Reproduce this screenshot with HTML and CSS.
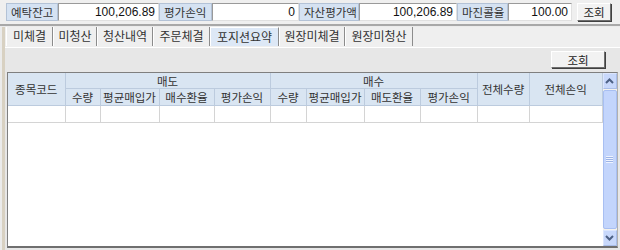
FILE: index.html
```html
<!DOCTYPE html>
<html lang="ko">
<head>
    <meta charset="UTF-8">
    <title>포지션요약</title>
    <link rel="stylesheet" href="styles.css">
</head>
<body>
    <div class="topbar">
        <span class="lbl w52">예탁잔고</span>
        <span class="val w101">100,206.89</span>
        <span class="lbl w53">평가손익</span>
        <span class="val w87">0</span>
        <span class="lbl w60">자산평가액</span>
        <span class="val w98">100,206.89</span>
        <span class="lbl w51">마진콜율</span>
        <span class="val w64">100.00</span>
        <button class="btn top-btn">조회</button>
    </div>

    <div class="frame">
        <div class="tabs">
            <span class="tab t47">미체결</span>
            <span class="tab t44">미청산</span>
            <span class="tab t56">청산내역</span>
            <span class="tab t57">주문체결</span>
            <span class="tab t69 on">포지션요약</span>
            <span class="tab t66">원장미체결</span>
            <span class="tab t68">원장미청산</span>
        </div>

        <div class="panel">
            <div class="tools">
                <button class="btn sub-btn">조회</button>
            </div>
            <div class="grid">
                <div class="grid-body">
                    <table>
                        <colgroup>
                            <col style="width:57px"><col style="width:35px"><col style="width:59px"><col style="width:55px"><col style="width:56px">
                            <col style="width:36px"><col style="width:58px"><col style="width:56px"><col style="width:57px">
                            <col style="width:52px"><col style="width:73px">
                        </colgroup>
                        <tr class="h1">
                            <th rowspan="2">종목코드</th>
                            <th colspan="4">매도</th>
                            <th colspan="4">매수</th>
                            <th rowspan="2">전체수량</th>
                            <th rowspan="2">전체손익</th>
                        </tr>
                        <tr class="h2">
                            <th>수량</th><th>평균매입가</th><th>매수환율</th><th>평가손익</th>
                            <th>수량</th><th>평균매입가</th><th>매도환율</th><th>평가손익</th>
                        </tr>
                        <tr class="row">
                            <td></td><td></td><td></td><td></td><td></td><td></td><td></td><td></td><td></td><td></td><td></td>
                        </tr>
                    </table>
                </div>
                <div class="vscroll">
                    <div class="arrow">
                        <svg width="9" height="6" viewBox="0 0 9 6"><path d="M1 5 L4.5 1.5 L8 5" fill="none" stroke="#4d6185" stroke-width="2"/></svg>
                    </div>
                    <div class="thumb">
                        <span class="grip"></span>
                    </div>
                    <div class="arrow">
                        <svg width="9" height="6" viewBox="0 0 9 6"><path d="M1 1 L4.5 4.5 L8 1" fill="none" stroke="#4d6185" stroke-width="2"/></svg>
                    </div>
                </div>
            </div>
        </div>
    </div>
</body>
</html>
```

FILE: styles.css
```css
body{
    margin: 0;
    width: 620px;
    height: 250px;
    overflow: hidden;
    background-color: #ebebeb;
    font-family: "Noto Sans CJK KR", "Liberation Sans", sans-serif;
    font-size: 11px;
    color: #222;
}
.topbar{
    display: flex;
    align-items: center;
    height: 26px;
    padding-left: 6px;
    box-sizing: border-box;
    border-bottom: 2px solid #a8a8a8;
    background-color: #efefef;
}
.lbl{
    height: 18px;
    line-height: 17px;
    box-sizing: border-box;
    padding-left: 4px;
    background-color: #d5e2f2;
    border: 1px solid #b3c2d6;
    color: #333;
    font-size: 11.5px;
}
.val{
    height: 18px;
    line-height: 16px;
    box-sizing: border-box;
    padding-right: 3px;
    text-align: right;
    background-color: #fff;
    border: 1px solid #9a9a9a;
    border-right-color: #e0e0e0;
    border-bottom-color: #e0e0e0;
    font-family: "Liberation Sans", sans-serif;
    font-size: 12px;
    color: #111;
}
.w52{ width: 52px; }
.w101{ width: 101px; }
.w53{ width: 53px; }
.w87{ width: 87px; }
.w60{ width: 60px; }
.w98{ width: 98px; }
.w51{ width: 51px; }
.w64{ width: 64px; }
.btn{
    outline: none;
    padding: 0;
    font-family: "Noto Sans CJK KR", sans-serif;
    font-size: 11.5px;
    color: #222;
    background-color: #f2f2f2;
    border: 1px solid #fff;
    border-right-color: #6e6e6e;
    border-bottom-color: #6e6e6e;
    box-shadow: 1px 1px 0 #404040;
}
.top-btn{
    width: 34px;
    height: 18px;
    margin-left: 5px;
    line-height: 14px;
}
.frame{
    margin-left: 2px;
    border-left: 3px solid #d8d1c2;
    height: 224px;
    box-sizing: border-box;
}
.tabs{
    display: flex;
    height: 20px;
    margin-top: 1px;
    padding-left: 1px;
    border-bottom: 1px solid #fff;
    background-color: #efefef;
}
.tab{
    height: 19px;
    line-height: 18px;
    text-align: center;
    box-sizing: border-box;
    border-right: 1px solid #8c8c8c;
    border-left: 1px solid #fff;
    font-size: 12px;
    color: #333;
}
.tab.on{
    background-color: #dde8f6;
    border-top: 1px solid #fff;
}
.t47{ width: 47px; }
.t44{ width: 44px; }
.t56{ width: 56px; }
.t57{ width: 57px; }
.t69{ width: 69px; }
.t66{ width: 66px; }
.t68{ width: 68px; }
.panel{
    background-color: #e7e7e7;
    height: 203px;
}
.tools{
    display: flex;
    justify-content: flex-end;
    height: 24px;
    padding: 3px 15px 0 0;
    box-sizing: border-box;
}
.sub-btn{
    width: 54px;
    height: 17px;
    line-height: 14px;
}
.grid{
    display: flex;
    margin-left: 2px;
    width: 611px;
    height: 176px;
    box-sizing: border-box;
    background-color: #fff;
    border: 1px solid #7f7f7f;
    border-bottom: 2px solid #6f6f6f;
    border-right-color: #b0b0b0;
}
.grid-body{
    flex: 1;
}
table{
    border-collapse: collapse;
    table-layout: fixed;
    width: 594px;
}
th{
    background-color: #d9e5f2;
    border: 1px solid #bccbde;
    border-top: none;
    font-weight: normal;
    font-size: 11.5px;
    color: #333;
    padding: 0;
    white-space: nowrap;
    overflow: hidden;
}
.h1 th{
    height: 15px;
    line-height: 14px;
}
.h2 th{
    height: 16px;
    line-height: 15px;
}
th:first-child{
    border-left: none;
}
td{
    height: 16px;
    border: 1px solid #d4d4d4;
    border-top: none;
    padding: 0;
}
td:first-child{
    border-left: none;
}
.vscroll{
    width: 16px;
    display: flex;
    flex-direction: column;
    background-color: #f4f2ec;
}
.arrow{
    height: 16px;
    box-sizing: border-box;
    display: flex;
    align-items: center;
    justify-content: center;
    background-color: #c8d8fb;
    border: 1px solid #fff;
    border-color: #dce6fd #a9bde8 #a9bde8 #dce6fd;
}
.thumb{
    flex: 1;
    margin: 1px 0;
    display: flex;
    align-items: center;
    justify-content: center;
    background-color: #c3d5fc;
    border: 1px solid #a8bff2;
    border-radius: 2px;
}
.grip{
    width: 7px;
    height: 7px;
    background: repeating-linear-gradient(#eef3ff 0 1px, #9db4e6 1px 2px);
}
```
